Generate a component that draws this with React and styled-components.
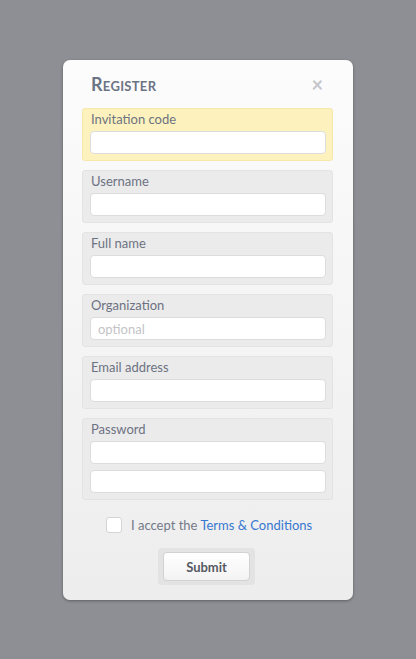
import React from 'react'
import styled, { createGlobalStyle } from 'styled-components'

const Global = createGlobalStyle`
  html, body {
    margin: 0;
    padding: 0;
    background: #8e8f94;
    font-family: Lato, "Open Sans", sans-serif;
  }
`

const Page = styled.div`
  min-height: 659px;
  display: flex;
  justify-content: center;
  align-items: flex-start;
  padding-top: 60px;
  box-sizing: border-box;
`

const Card = styled.div`
  width: 290px;
  box-sizing: border-box;
  padding: 0 20px 15px 19px;
  border-radius: 7px;
  background: linear-gradient(180deg, #fcfcfc 0%, #ededed 100%);
  box-shadow: 0 1px 3px rgba(0, 0, 0, 0.35);
  display: flex;
  flex-direction: column;
`

const Header = styled.div`
  display: flex;
  align-items: center;
  justify-content: space-between;
  height: 48px;
  flex-shrink: 0;
  padding: 0 10px 0 9px;
`

const Title = styled.h2`
  margin: 0;
  font-variant: small-caps;
  font-size: 18px;
  font-weight: 700;
  color: #6b7384;
  letter-spacing: 0.3px;
`

const Close = styled.span`
  font-size: 20px;
  font-weight: 700;
  color: #c4c6cb;
  line-height: 1;
`

const Fields = styled.div`
  display: flex;
  flex-direction: column;
  gap: 9px;
`

const Group = styled.div`
  display: flex;
  flex-direction: column;
  gap: 4px;
  padding: 3px 6px 6px 7px;
  border-radius: 3px;
  background: ${p => (p.highlight ? '#fdf2bd' : '#ebebeb')};
  border: 1px solid ${p => (p.highlight ? '#f5e8a8' : '#e3e3e3')};
`

const Label = styled.label`
  font-size: 13px;
  color: #6d7282;
  line-height: 15px;
  padding-left: 1px;
`

const Input = styled.input`
  height: 23px;
  box-sizing: border-box;
  border: 1px solid #dcdcdc;
  border-radius: 4px;
  background: #fff;
  font-family: inherit;
  font-size: 13px;
  padding: 0 7px;
  outline: none;
  & + & {
    margin-top: 2px;
  }
  &::placeholder {
    color: #c3c3c6;
  }
`

const Accept = styled.label`
  display: flex;
  align-items: center;
  gap: 9px;
  margin-top: 17px;
  padding-left: 24px;
  font-size: 13px;
  color: #747a88;
`

const Box = styled.span`
  width: 14px;
  height: 14px;
  border: 1px solid #d4d4d4;
  border-radius: 3px;
  background: #fff;
`

const Link = styled.a`
  color: #3777cf;
  text-decoration: none;
`

const ButtonWrap = styled.div`
  align-self: center;
  margin-top: 15px;
  margin-right: 2px;
  padding: 4px 5px;
  background: #e3e3e3;
  border-radius: 4px;
`

const Button = styled.button`
  width: 87px;
  height: 29px;
  border: 1px solid #d2d2d2;
  border-radius: 4px;
  background: linear-gradient(180deg, #ffffff, #f3f3f3);
  font-family: inherit;
  font-size: 13px;
  font-weight: 700;
  color: #555a63;
  display: block;
`

export default function App() {
  return (
    <Page>
      <Global />
      <Card>
        <Header>
          <Title>Register</Title>
          <Close>×</Close>
        </Header>
        <Fields>
          <Group highlight>
            <Label>Invitation code</Label>
            <Input />
          </Group>
          <Group>
            <Label>Username</Label>
            <Input />
          </Group>
          <Group>
            <Label>Full name</Label>
            <Input />
          </Group>
          <Group>
            <Label>Organization</Label>
            <Input placeholder="optional" />
          </Group>
          <Group>
            <Label>Email address</Label>
            <Input />
          </Group>
          <Group>
            <Label>Password</Label>
            <Input type="password" />
            <Input type="password" />
          </Group>
        </Fields>
        <Accept>
          <Box />
          <span>
            I accept the <Link>Terms &amp; Conditions</Link>
          </span>
        </Accept>
        <ButtonWrap>
          <Button>Submit</Button>
        </ButtonWrap>
      </Card>
    </Page>
  )
}
